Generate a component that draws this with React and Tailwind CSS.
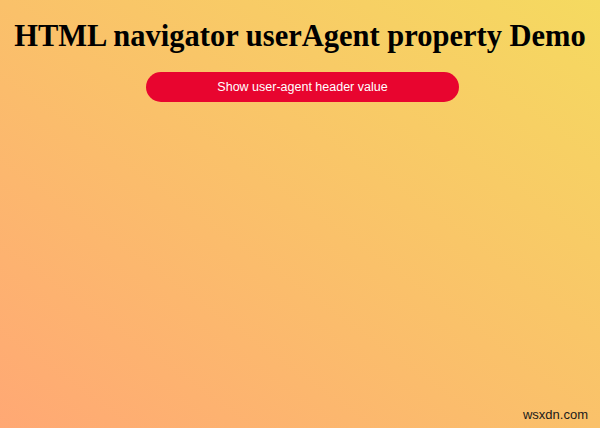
export default function App() {
  return (
    <div className="relative w-[600px] h-[428px] overflow-hidden bg-[linear-gradient(to_top_right,#ffa874,#f5da60)]">
      <h1 className="pt-[19px] text-center text-[30.5px] leading-[34px] font-bold text-black font-['Liberation_Serif',serif]">
        HTML navigator userAgent property Demo
      </h1>
      <div className="mt-[19px] flex justify-center pl-[5px]">
        <button className="w-[313px] h-[30px] rounded-full bg-[#e8052f] text-[12.5px] text-white font-['Liberation_Sans',sans-serif]">
          Show user-agent header value
        </button>
      </div>
      <div className="absolute right-[12px] bottom-[4px] text-[13px] text-[#1a1a1a] font-['Liberation_Sans',sans-serif]">
        wsxdn.com
      </div>
    </div>
  );
}
